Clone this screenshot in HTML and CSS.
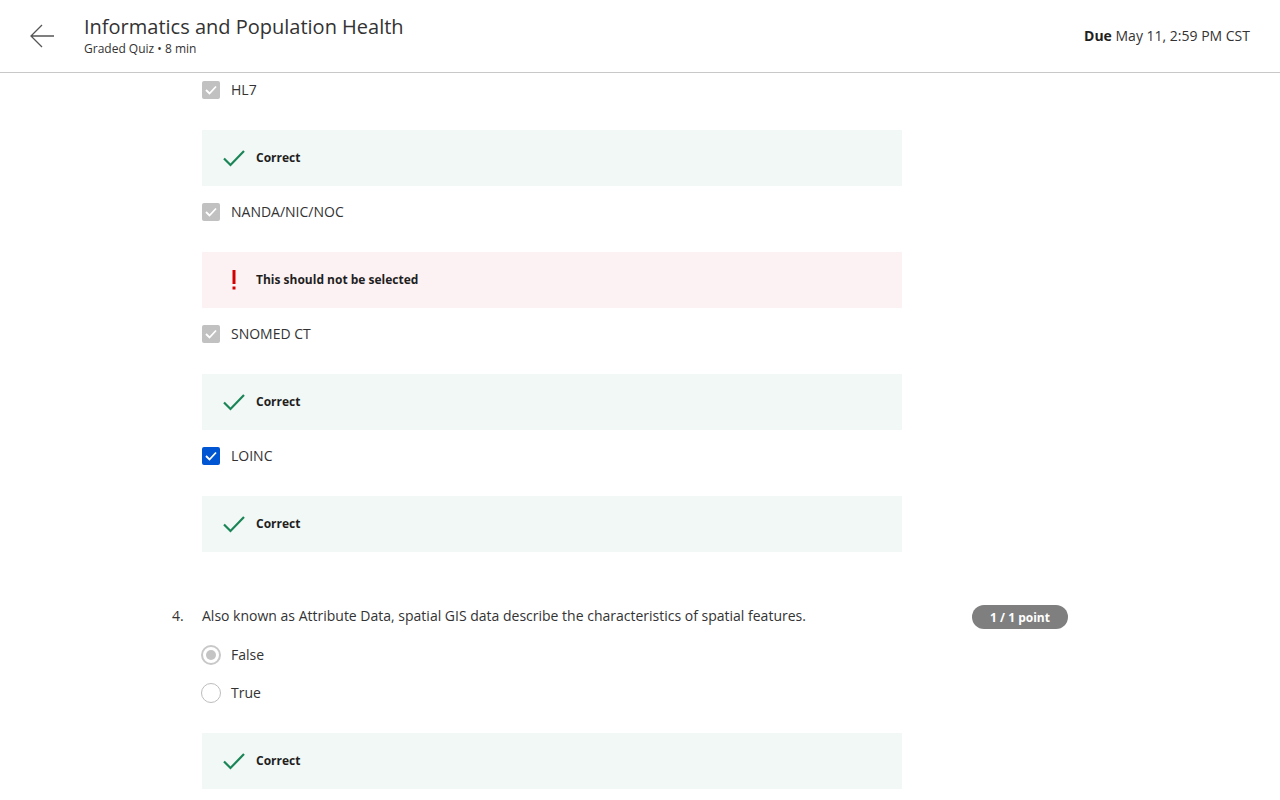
FILE: index.html
```html
<!DOCTYPE html>
<html lang="en">
<head>
<meta charset="utf-8">
<title>Informatics and Population Health</title>
<link rel="stylesheet" href="styles.css">
</head>
<body>
<header class="topbar">
  <div class="topbar-left">
    <button class="back" aria-label="Back">
      <svg width="26" height="24" viewBox="0 0 26 24"><path d="M25 12H2M13 1L2 12L13 23" fill="none" stroke="#555" stroke-width="1.3"/></svg>
    </button>
    <div class="titles">
      <h1 class="title">Informatics and Population Health</h1>
      <div class="subtitle">Graded Quiz • 8 min</div>
    </div>
  </div>
  <div class="due"><b>Due</b> May 11, 2:59 PM CST</div>
</header>

<main class="content">
  <div class="question">
    <div class="options">
      <div class="opt"><span class="box-check gray"><svg width="12" height="10" viewBox="0 0 12 10"><path d="M1 5l3.5 3.5L11 1.5" fill="none" stroke="#fff" stroke-width="1.8"/></svg></span><span class="label">HL7</span></div>
      <div class="fb ok"><svg class="ic" width="22" height="18" viewBox="0 0 22 18"><path d="M1 9.5l6.5 6.5L21 2" fill="none" stroke="#1a8557" stroke-width="2.2"/></svg><span>Correct</span></div>

      <div class="opt"><span class="box-check gray"><svg width="12" height="10" viewBox="0 0 12 10"><path d="M1 5l3.5 3.5L11 1.5" fill="none" stroke="#fff" stroke-width="1.8"/></svg></span><span class="label">NANDA/NIC/NOC</span></div>
      <div class="fb bad"><svg class="ic" width="22" height="20" viewBox="0 0 22 20"><rect x="9.5" y="0" width="3" height="14" fill="#d30001"/><rect x="9.5" y="16.5" width="3" height="3" fill="#d30001"/></svg><span>This should not be selected</span></div>

      <div class="opt"><span class="box-check gray"><svg width="12" height="10" viewBox="0 0 12 10"><path d="M1 5l3.5 3.5L11 1.5" fill="none" stroke="#fff" stroke-width="1.8"/></svg></span><span class="label">SNOMED CT</span></div>
      <div class="fb ok"><svg class="ic" width="22" height="18" viewBox="0 0 22 18"><path d="M1 9.5l6.5 6.5L21 2" fill="none" stroke="#1a8557" stroke-width="2.2"/></svg><span>Correct</span></div>

      <div class="opt"><span class="box-check blue"><svg width="12" height="10" viewBox="0 0 12 10"><path d="M1 5l3.5 3.5L11 1.5" fill="none" stroke="#fff" stroke-width="1.8"/></svg></span><span class="label">LOINC</span></div>
      <div class="fb ok last"><svg class="ic" width="22" height="18" viewBox="0 0 22 18"><path d="M1 9.5l6.5 6.5L21 2" fill="none" stroke="#1a8557" stroke-width="2.2"/></svg><span>Correct</span></div>
    </div>
  </div>

  <div class="question q4">
    <div class="qhead">
      <span class="qnum">4.</span>
      <span class="qtext">Also known as Attribute Data, spatial GIS data describe the characteristics of spatial features.</span>
      <span class="badge">1 / 1 point</span>
    </div>
    <div class="options">
      <div class="ropt"><span class="radio selected"></span><span class="label">False</span></div>
      <div class="ropt"><span class="radio"></span><span class="label">True</span></div>
      <div class="fb ok radio-fb"><svg class="ic" width="22" height="18" viewBox="0 0 22 18"><path d="M1 9.5l6.5 6.5L21 2" fill="none" stroke="#1a8557" stroke-width="2.2"/></svg><span>Correct</span></div>
    </div>
  </div>
</main>
</body>
</html>
```

FILE: styles.css
```css
* { box-sizing: border-box; }
html, body { margin: 0; padding: 0; background: #fff; }
body {
  font-family: "Open Sans", "Noto Sans", "Liberation Sans", sans-serif;
  color: #1f1f1f;
  width: 1280px;
  height: 800px;
  overflow: hidden;
}

.topbar {
  height: 73px;
  border-bottom: 1px solid #c8c8c8;
  display: flex;
  justify-content: space-between;
  align-items: flex-start;
  padding: 0 30px 0 29px;
}
.topbar-left { display: flex; align-items: flex-start; }
.back {
  border: 0;
  background: none;
  padding: 0;
  margin: 24px 29px 0 0;
  width: 26px;
  height: 24px;
  display: flex;
  cursor: pointer;
}
.titles { padding-top: 13px; }
.title {
  margin: 0;
  font-size: 20px;
  font-weight: 400;
  line-height: 27px;
  color: #333;
}
.subtitle {
  font-size: 12px;
  line-height: 16px;
  margin-top: 1px;
  color: #333;
}
.due {
  font-size: 14px;
  line-height: 20px;
  margin-top: 26px;
  color: #333;
}
.due b { font-weight: 700; color: #1f1f1f; }

.content { padding-left: 172px; }
.options { padding-left: 30px; width: 730px; }

.opt {
  height: 34px;
  display: flex;
  align-items: center;
  gap: 11px;
}
.box-check {
  width: 18px;
  height: 18px;
  border-radius: 2px;
  display: flex;
  align-items: center;
  justify-content: center;
}
.box-check.gray { background: #c1c1c1; }
.box-check.blue { background: #0056d2; }
.label { font-size: 14px; line-height: 20px; color: #333; }

.fb {
  height: 56px;
  margin: 23px 0 9px;
  display: flex;
  align-items: center;
  gap: 11px;
  padding-left: 21px;
  font-size: 12px;
  font-weight: 700;
  color: #1f1f1f;
}
.fb span { line-height: 16px; margin-top: -1px; }
.fb.ok { background: #f2f8f5; }
.fb.bad { background: #fdf2f3; }
.fb.last { margin-bottom: 53px; }
.ic { flex: none; }

.qhead {
  height: 24px;
  display: flex;
  align-items: center;
  font-size: 14px;
  color: #333;
}
.qnum, .qtext { line-height: 20px; margin-top: -2px; }
.qnum { width: 30px; }
.qtext { width: 770px; }
.badge {
  width: 96px;
  height: 24px;
  border-radius: 12px;
  background: #7f7f7f;
  color: #fff;
  font-size: 12px;
  font-weight: 700;
  display: flex;
  align-items: center;
  justify-content: center;
}
.q4 .qhead + .options { padding-top: 7px; }

.ropt {
  height: 38px;
  display: flex;
  align-items: center;
  gap: 10px;
  margin-left: -1px;
}
.radio {
  width: 20px;
  height: 20px;
  border-radius: 50%;
  border: 1.5px solid #bdbdbd;
  display: flex;
  align-items: center;
  justify-content: center;
}
.radio.selected { border: 2px solid #c8c8c8; }
.radio.selected::after {
  content: "";
  width: 10px;
  height: 10px;
  border-radius: 50%;
  background: #c4c4c4;
}
.fb.radio-fb { margin-top: 21px; }
```
